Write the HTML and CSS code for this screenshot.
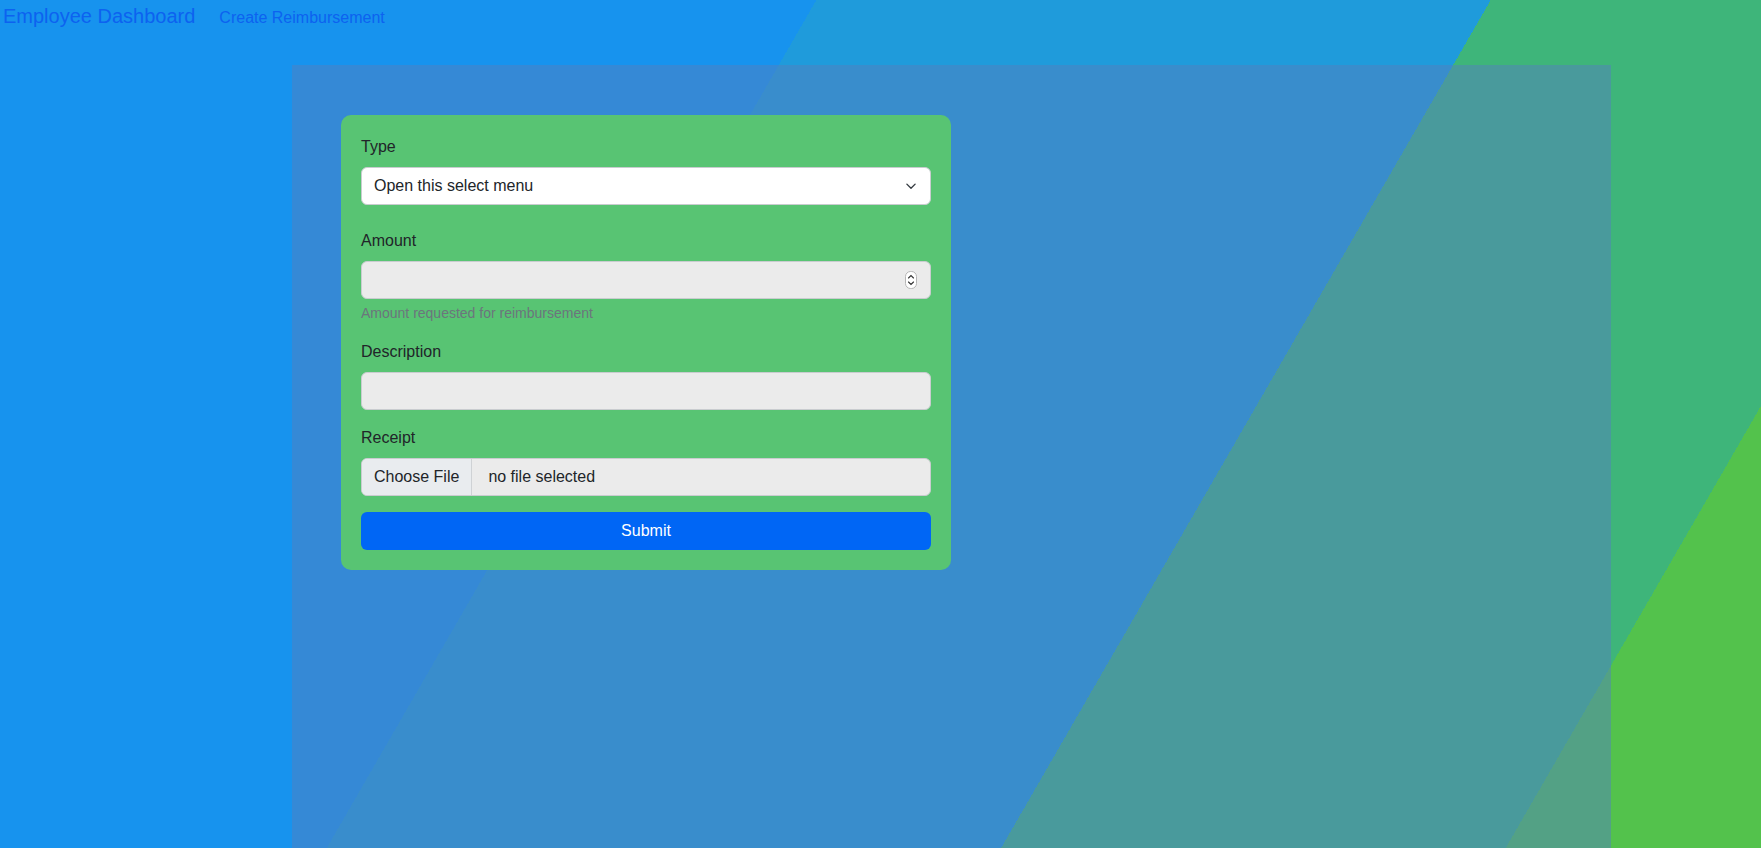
FILE: index.html
```html
<!DOCTYPE html>
<html lang="en">
<head>
<meta charset="utf-8">
<title>Create Reimbursement</title>
<link rel="stylesheet" href="styles.css">
</head>
<body>
<nav class="topnav">
  <a class="brand" href="#">Employee Dashboard</a>
  <a class="nav-link" href="#">Create Reimbursement</a>
</nav>
<main class="panel">
  <form class="card">
    <div class="group group-first">
      <label class="label" for="type">Type</label>
      <div class="control-wrap">
        <select id="type" class="control select">
          <option>Open this select menu</option>
        </select>
        <svg class="chevron" width="16" height="12" viewBox="0 0 16 16" aria-hidden="true"><path d="m2.5 5.5 5.5 5.5 5.5-5.5" fill="none" stroke="#343a40" stroke-width="1.8" stroke-linecap="round" stroke-linejoin="round"/></svg>
      </div>
    </div>
    <div class="group">
      <label class="label" for="amount">Amount</label>
      <div class="control-wrap">
        <input id="amount" class="control input" type="text">
        <svg class="spinner" width="12" height="18" viewBox="0 0 12 18" aria-hidden="true">
          <rect x="0.5" y="0.5" width="11" height="17" rx="5" fill="#fff" stroke="#b5b5b5"/>
          <path d="m3.5 7 2.5-2.5 2.5 2.5" fill="none" stroke="#333" stroke-width="1.1" stroke-linecap="round"/>
          <path d="m3.5 11 2.5 2.5 2.5-2.5" fill="none" stroke="#333" stroke-width="1.1" stroke-linecap="round"/>
        </svg>
      </div>
      <div class="help">Amount requested for reimbursement</div>
    </div>
    <div class="group">
      <label class="label" for="desc">Description</label>
      <input id="desc" class="control input" type="text">
    </div>
    <div class="group">
      <span class="label">Receipt</span>
      <label class="control file">
        <input class="file-input" type="file">
        <span class="file-btn">Choose File</span>
        <span class="file-name">no file selected</span>
      </label>
    </div>
    <button class="submit" type="button">Submit</button>
  </form>
</main>
</body>
</html>
```
FILE: styles.css
```css
html {
  height: 100%;
  background-color: #1793ee;
  background-image: linear-gradient(120deg,
    #1793ee 0px, #1793ee 707px,
    #1f9bdb 707px, #1f9bdb 1291px,
    #3eb57a 1291px, #3eb57a 1728px,
    #53c24c 1728px);
  background-attachment: fixed;
}

body {
  margin: 0;
  min-height: 100%;
  font-family: "Liberation Sans", Arial, Helvetica, sans-serif;
  color: #212529;
  overflow: hidden;
}

.topnav {
  display: flex;
  align-items: baseline;
  height: 65px;
  box-sizing: border-box;
  padding: 1px 0 0 3px;
}

.brand {
  font-size: 20px;
  line-height: 30px;
  color: #0d62f0;
  text-decoration: none;
}

.nav-link {
  margin-left: 24px;
  font-size: 16px;
  line-height: 24px;
  color: #0d62f0;
  text-decoration: none;
}

.panel {
  margin-left: 292px;
  width: 1319px;
  height: 783px;
  box-sizing: border-box;
  padding: 50px 49px;
  background: rgba(83, 127, 190, 0.5);
}

.card {
  width: 610px;
  box-sizing: border-box;
  padding: 20px;
  background: #58c473;
  border-radius: 10px;
}

.group {
  margin-bottom: 16px;
}

.group-first {
  margin-bottom: 24px;
}

.label {
  display: block;
  margin-bottom: 8px;
  font-size: 16px;
  line-height: 24px;
  color: #212529;
}

.control-wrap {
  position: relative;
}

.control {
  display: block;
  width: 100%;
  height: 38px;
  box-sizing: border-box;
  margin: 0;
  padding: 6px 12px;
  font-family: inherit;
  font-size: 16px;
  line-height: 24px;
  color: #212529;
  border: 1px solid #c9cccf;
  border-radius: 6px;
  outline: none;
}

.select {
  appearance: none;
  -webkit-appearance: none;
  background: #fff;
}

.input {
  background: #ebebeb;
}

.chevron {
  position: absolute;
  right: 12px;
  top: 13px;
  pointer-events: none;
}

.spinner {
  position: absolute;
  right: 14px;
  top: 10px;
  pointer-events: none;
}

.help {
  margin-top: 4px;
  font-size: 14px;
  line-height: 21px;
  color: #6c757d;
}

.file {
  display: flex;
  align-items: stretch;
  padding: 0;
  overflow: hidden;
  background: #ebebeb;
  cursor: pointer;
}

.file-input {
  display: none;
}

.file-btn {
  display: flex;
  align-items: center;
  padding: 0 12px;
  background: #e9ecef;
  border-right: 1px solid #cfd2d5;
}

.file-name {
  display: flex;
  align-items: center;
  padding-left: 16px;
}

.submit {
  display: block;
  width: 100%;
  height: 38px;
  margin: 0;
  padding: 0;
  font-family: inherit;
  font-size: 16px;
  color: #fff;
  background: #0066f5;
  border: none;
  border-radius: 6px;
  cursor: pointer;
}
```
